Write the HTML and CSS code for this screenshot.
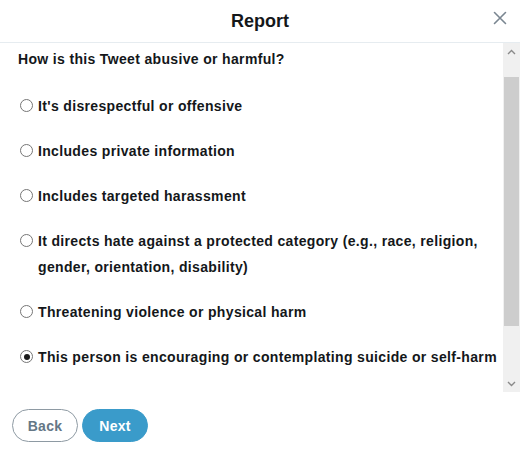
FILE: index.html
```html
<!DOCTYPE html>
<html>
<head>
<meta charset="utf-8">
<link rel="stylesheet" href="styles.css">
</head>
<body>
<div class="dialog">
  <header class="head">
    <h1 class="title">Report</h1>
    <button class="close" aria-label="Close">
      <svg width="14" height="14" viewBox="0 0 14 14"><path d="M1.5 1.5 L12.5 12.5 M12.5 1.5 L1.5 12.5" stroke="#7a8691" stroke-width="1.6" fill="none" stroke-linecap="round"/></svg>
    </button>
  </header>
  <div class="body">
    <div class="scroll">
      <p class="question">How is this Tweet abusive or harmful?</p>
      <label class="opt"><span class="radio"></span><span class="txt">It's disrespectful or offensive</span></label>
      <label class="opt"><span class="radio"></span><span class="txt">Includes private information</span></label>
      <label class="opt"><span class="radio"></span><span class="txt">Includes targeted harassment</span></label>
      <label class="opt"><span class="radio"></span><span class="txt">It directs hate against a protected category (e.g., race, religion, gender, orientation, disability)</span></label>
      <label class="opt"><span class="radio"></span><span class="txt">Threatening violence or physical harm</span></label>
      <label class="opt"><span class="radio on"></span><span class="txt">This person is encouraging or contemplating suicide or self-harm</span></label>
    </div>
    <div class="sbar">
      <div class="arrow"><svg width="9" height="6" viewBox="0 0 9 6"><path d="M1 5 L4.5 1.5 L8 5" stroke="#8a8a8a" stroke-width="1.4" fill="none"/></svg></div>
      <div class="track"><div class="thumb"></div></div>
      <div class="arrow"><svg width="9" height="6" viewBox="0 0 9 6"><path d="M1 1 L4.5 4.5 L8 1" stroke="#8a8a8a" stroke-width="1.4" fill="none"/></svg></div>
    </div>
  </div>
  <footer class="foot">
    <button class="btn back">Back</button>
    <button class="btn next">Next</button>
  </footer>
</div>
</body>
</html>
```
FILE: styles.css
```css
html, body {
  margin: 0;
  padding: 0;
  background: #ffffff;
}
body {
  font-family: "Liberation Sans", Arial, sans-serif;
  color: #14171a;
}
.dialog {
  width: 520px;
  height: 454px;
  display: flex;
  flex-direction: column;
}
.head {
  position: relative;
  height: 42px;
  border-bottom: 1px solid #e6ecf0;
  display: flex;
  align-items: center;
  justify-content: center;
  flex: none;
}
.title {
  margin: 0;
  font-size: 18px;
  font-weight: bold;
  color: #14171a;
}
.close {
  position: absolute;
  right: 13px;
  top: 11px;
  width: 14px;
  height: 14px;
  padding: 0;
  border: 0;
  background: none;
  display: flex;
}
.body {
  height: 349px;
  display: flex;
  flex: none;
}
.scroll {
  flex: 1;
  padding-left: 18px;
  overflow: hidden;
}
.question {
  margin: 6px 0 0;
  font-size: 14px;
  font-weight: bold;
  line-height: 20px;
  letter-spacing: 0.34px;
  padding-bottom: 14px;
}
.opt {
  display: flex;
  align-items: flex-start;
  padding: 9.5px 0 9.5px 2px;
  font-size: 14px;
  font-weight: bold;
  line-height: 26px;
  letter-spacing: 0.34px;
}
.radio {
  flex: none;
  width: 11px;
  height: 11px;
  border: 1px solid #767676;
  border-radius: 50%;
  margin-top: 6.5px;
  margin-right: 5px;
  box-sizing: content-box;
  position: relative;
}
.radio.on::after {
  content: "";
  position: absolute;
  left: 2.5px;
  top: 2.5px;
  width: 6px;
  height: 6px;
  border-radius: 50%;
  background: #1a1a1a;
}
.txt {
  flex: 1;
}
.sbar {
  width: 17px;
  flex: none;
  background: #f0f0f0;
  display: flex;
  flex-direction: column;
}
.arrow {
  height: 17px;
  display: flex;
  align-items: center;
  justify-content: center;
  flex: none;
}
.track {
  flex: 1;
  padding-top: 17px;
}
.thumb {
  height: 249px;
  background: #cdcdcd;
  margin: 0 1px;
}
.foot {
  display: flex;
  gap: 4px;
  padding: 17px 0 0 12px;
}
.btn {
  width: 66px;
  height: 33px;
  border-radius: 17px;
  font-family: "Liberation Sans", Arial, sans-serif;
  font-size: 14px;
  font-weight: bold;
  letter-spacing: 0.3px;
  padding: 0;
}
.back {
  background: #ffffff;
  border: 1px solid #8e9aa3;
  color: #657786;
}
.next {
  background: #3a9bca;
  border: 1px solid #3a9bca;
  color: #ffffff;
}
```
